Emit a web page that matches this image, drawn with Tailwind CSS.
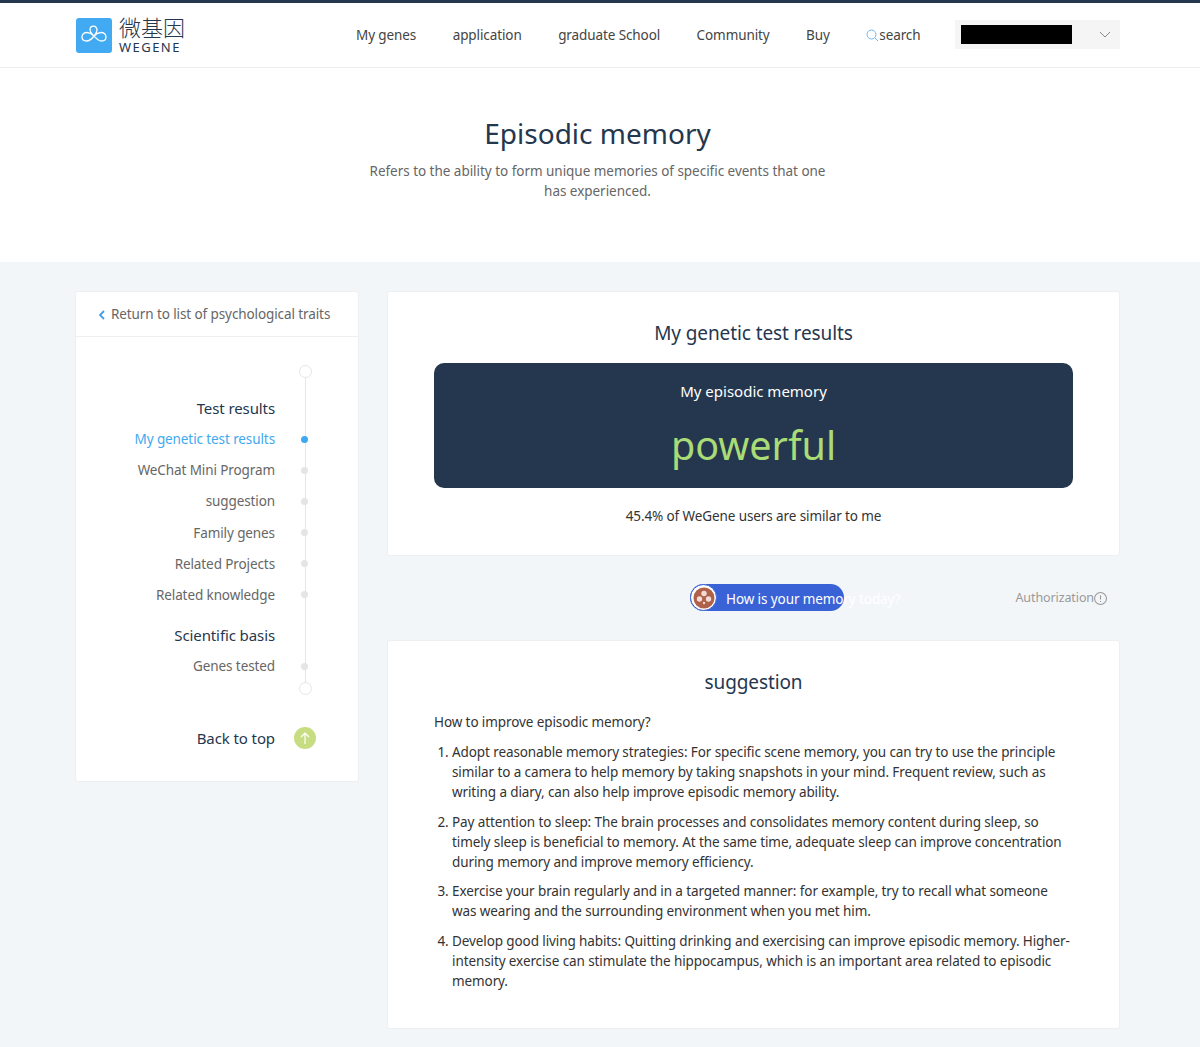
<!DOCTYPE html>
<html><head><meta charset="utf-8"><script src="https://cdn.jsdelivr.net/npm/@tailwindcss/browser@4"></script></head>
<body class="bg-white font-['Noto_Sans','Noto_Sans_CJK_SC',sans-serif] text-[13.500px] text-[#555]">
<div class="h-[1047px] overflow-hidden flex flex-col">
<header class="h-[68px] shrink-0 border-t-[3px] border-b border-t-[#25374e] border-b-[#eeeeee] bg-white flex items-center pl-[76px] pr-[80px]">
  <div class="w-[36px] h-[35px] rounded-[3px] bg-[#41aaf2] flex items-center justify-center">
    <svg width="26" height="20" viewBox="0 0 26 20" fill="none" stroke="#fff" stroke-width="1.300"><path d="M13 11C10.500 8.500 8.500 7.500 6 7.500C3 7.500 1 9.500 1 12C1 14.500 3 16 5.500 16C9 16 11.500 13 13 11C14.500 9 16 7.500 16 5C16 2.800 14.500 1.200 12.500 1.200C10.500 1.200 9 2.800 9 5C9 7.500 11 9 13 11C15 13 17 16 20.500 16C23 16 25 14.500 25 12C25 9.500 23 7.500 20 7.500C17.500 7.500 15.500 8.500 13 11Z"/></svg>
  </div>
  <div class="ml-[7px] w-[66px] text-[#25374e] mt-[-2px]">
    <div class="text-[22px] leading-[25px] font-['Noto_Sans_CJK_SC',sans-serif] font-light whitespace-nowrap">微基因</div>
    <div class="text-[13px] leading-[14px] tracking-[1.450px] whitespace-nowrap font-['Noto_Sans',sans-serif] mt-[1px]">WEGENE</div>
  </div>
  <nav class="ml-[171px] flex items-center gap-[36.500px] text-[13.500px] text-[#444] leading-[20px] tracking-[-0.100px]">
    <span>My genes</span><span>application</span><span>graduate School</span><span>Community</span><span>Buy</span>
    <span class="flex items-center">
      <svg width="13" height="13" viewBox="0 0 13 13" fill="none" stroke="#6cb8ee" stroke-width="1"><circle cx="5.500" cy="5.500" r="4.500"/><path d="M9 9l3 3"/></svg><span>search</span></span>
  </nav>
  <div class="ml-auto w-[165px] h-[29px] bg-[#f5f5f5] flex items-center pl-[6px] pr-[9px] justify-between mt-[-2px]">
    <div class="w-[111px] h-[19px] bg-black"></div>
    <svg width="12" height="7" viewBox="0 0 12 7" fill="none" stroke="#888" stroke-width="1"><path d="M1 1l5 5 5-5"/></svg>
  </div>
</header>

<section class="h-[194px] shrink-0 bg-white pt-[46px] flex flex-col items-center pr-[5px]">
  <h1 class="text-[28px] leading-[38px] text-[#25374e]">Episodic memory</h1>
  <p class="mt-[9px] w-[480px] text-center leading-[20px] text-[#666] tracking-[-0.030px]">Refers to the ability to form unique memories of specific events that one has experienced.</p>
</section>

<main class="flex-1 bg-[#f3f6f9] pt-[29px] pl-[75px] pr-[80px] flex items-start gap-[28px]">
  <aside class="w-[284px] h-[491px] shrink-0 bg-white border border-[#edf0f3] rounded-[3px]">
    <div class="h-[45px] border-b border-[#edf0f3] flex items-center pl-[23px] text-[#666] tracking-[-0.100px]">
      <svg class="mr-[6px] mt-[2px]" width="6" height="10" viewBox="0 0 6 10" fill="none" stroke="#3f9fe8" stroke-width="1.800"><path d="M5 1L1 5l4 4"/></svg>Return to list of psychological traits</div>
    <div class="relative">
      <div class="absolute left-[229px] top-[35px] w-px h-[317px] bg-[#e3e7ea]"></div>
      <div class="absolute left-[223px] top-[28px] w-[13px] h-[13px] rounded-full border border-[#e3e7ea] bg-white"></div>
      <div class="absolute left-[223px] top-[345px] w-[13px] h-[13px] rounded-full border border-[#e3e7ea] bg-white"></div>
      <div class="pt-[60px] w-[199px] flex flex-col items-end text-[#666] tracking-[-0.100px]">
        <div class="h-[22px] leading-[22px] text-[15px] text-[#25374e] mb-[9px]">Test results</div>
        <div class="relative h-[31.200px] leading-[22px] text-[#3fa9f0]">My genetic test results<i class="absolute left-full ml-[26px] top-[7.500px] w-[7px] h-[7px] rounded-full bg-[#3fa9f0]"></i></div>
        <div class="relative h-[31.200px] leading-[22px]">WeChat Mini Program<i class="absolute left-full ml-[26px] top-[7.500px] w-[7px] h-[7px] rounded-full bg-[#e3e5e7]"></i></div>
        <div class="relative h-[31.200px] leading-[22px]">suggestion<i class="absolute left-full ml-[26px] top-[7.500px] w-[7px] h-[7px] rounded-full bg-[#e3e5e7]"></i></div>
        <div class="relative h-[31.200px] leading-[22px]">Family genes<i class="absolute left-full ml-[26px] top-[7.500px] w-[7px] h-[7px] rounded-full bg-[#e3e5e7]"></i></div>
        <div class="relative h-[31.200px] leading-[22px]">Related Projects<i class="absolute left-full ml-[26px] top-[7.500px] w-[7px] h-[7px] rounded-full bg-[#e3e5e7]"></i></div>
        <div class="relative h-[31.200px] leading-[22px]">Related knowledge<i class="absolute left-full ml-[26px] top-[7.500px] w-[7px] h-[7px] rounded-full bg-[#e3e5e7]"></i></div>
        <div class="h-[22px] leading-[22px] text-[15px] text-[#25374e] mt-[9px] mb-[9px]">Scientific basis</div>
        <div class="relative h-[31.200px] leading-[22px]">Genes tested<i class="absolute left-full ml-[26px] top-[7.500px] w-[7px] h-[7px] rounded-full bg-[#e3e5e7]"></i></div>
        <div class="relative mt-[41px] h-[22px] leading-[22px] text-[15px] text-[#25374e]">Back to top
          <span class="absolute left-full ml-[19px] top-0 w-[22px] h-[22px] rounded-full bg-[#c8dd82] flex items-center justify-center"><svg width="10" height="12" viewBox="0 0 10 12" fill="none" stroke="#fff" stroke-width="1.200"><path d="M5 12V1M1 5l4-4 4 4"/></svg></span></div>
      </div>
    </div>
  </aside>
  <div class="w-[733px] shrink-0">
    <section class="h-[265px] bg-white border border-[#edf0f3] rounded-[3px] pt-[27px] px-[46px]">
      <h2 class="text-center text-[19px] leading-[28px] text-[#25374e] tracking-[-0.100px]">My genetic test results</h2>
      <div class="mt-[16px] h-[125px] rounded-[10px] bg-[#25374e] flex flex-col items-center pt-[17px]">
        <div class="text-[15px] leading-[22px] text-white">My episodic memory</div>
        <div class="text-[39.500px] leading-[54px] text-[#a9dc76] mt-[16px]">powerful</div>
      </div>
      <p class="mt-[17px] text-center leading-[22px] text-[#333] tracking-[-0.100px]">45.4% of WeGene users are similar to me</p>
    </section>
    <div class="h-[84px] relative flex items-center">
      <div class="absolute left-[303px] top-[28px] w-[154px] h-[27px] rounded-full bg-[#3a62d7]"></div>
      <div class="absolute left-[303px] top-[28px] w-[27px] h-[27px] rounded-full bg-white border border-[#3a62d7] flex items-center justify-center">
        <svg width="22" height="22" viewBox="0 0 22 22"><circle cx="11" cy="11" r="10.500" fill="#b0614a"/><circle cx="11" cy="6.500" r="2.700" fill="#f3dcd5"/><circle cx="6.500" cy="12" r="2.700" fill="#f3dcd5"/><circle cx="15.500" cy="12" r="2.700" fill="#f3dcd5"/><circle cx="11" cy="16" r="1.200" fill="#f3dcd5"/></svg>
      </div>
      <span class="absolute left-[339px] top-[32px] whitespace-nowrap text-white leading-[22px] tracking-[-0.100px]">How is your memory today?</span>
      <span class="absolute right-[13px] top-[31px] flex items-center text-[12.500px] leading-[22px] text-[#999] tracking-[-0.100px]">Authorization<svg width="13" height="13" viewBox="0 0 12 12" fill="none" stroke="#999" stroke-width="1"><circle cx="6" cy="6" r="5.500"/><path d="M6 3v4M6 8.200v1"/></svg></span>
    </div>
    <section class="h-[389px] bg-white border border-[#edf0f3] rounded-[3px] pt-[27px] px-[46px] text-[#333] tracking-[-0.100px]">
      <h2 class="text-center text-[19px] leading-[28px] text-[#25374e] tracking-[-0.100px]">suggestion</h2>
      <p class="mt-[16px] leading-[20px]">How to improve episodic memory?</p>
      <ol class="mt-[10px] list-decimal pl-[18px] leading-[20px] flex flex-col gap-[9.500px]">
        <li>Adopt reasonable memory strategies: For specific scene memory, you can try to use the principle similar to a camera to help memory by taking snapshots in your mind. Frequent review, such as writing a diary, can also help improve episodic memory ability.</li>
        <li>Pay attention to sleep: The brain processes and consolidates memory content during sleep, so timely sleep is beneficial to memory. At the same time, adequate sleep can improve concentration during memory and improve memory efficiency.</li>
        <li>Exercise your brain regularly and in a targeted manner: for example, try to recall what someone was wearing and the surrounding environment when you met him.</li>
        <li>Develop good living habits: Quitting drinking and exercising can improve episodic memory. Higher-intensity exercise can stimulate the hippocampus, which is an important area related to episodic memory.</li>
      </ol>
    </section>
  </div>
</main>
</div>
</body></html>
